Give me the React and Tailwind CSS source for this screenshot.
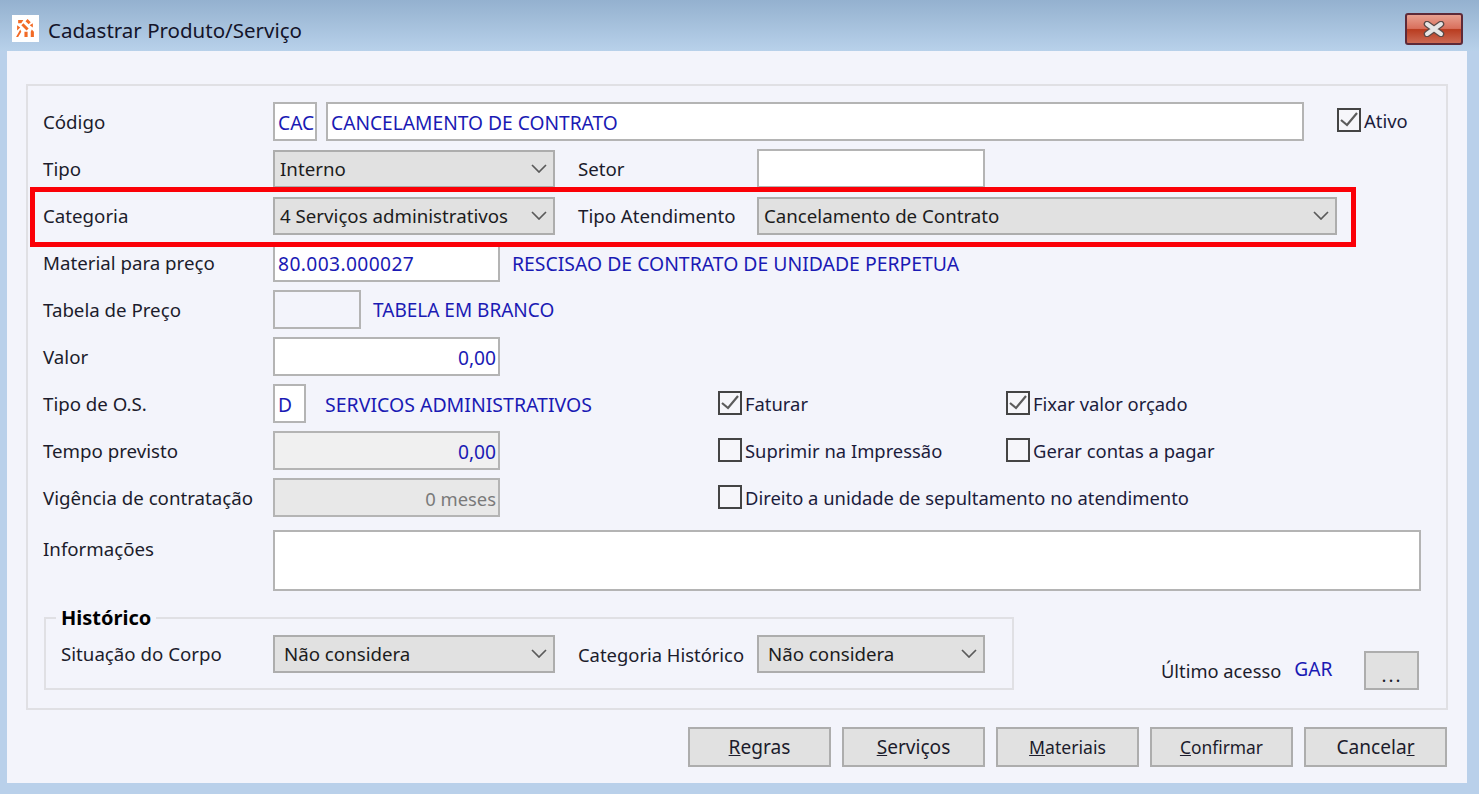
const blueText = 'text-[19.2px] text-[#1a1ab4] whitespace-nowrap';
const fieldBase = `border-2 border-[#b4b4b4] h-[39px] flex items-center ${blueText} px-[3px] pt-[3px] overflow-hidden shrink-0`;

function Label({ children, className = 'w-[230px]' }) {
  return <span className={`shrink-0 pt-[2px] text-[18.7px] text-[#1c1c2c] whitespace-nowrap ${className}`}>{children}</span>;
}

function Row({ label, children }) {
  return (
    <div className="flex items-center h-[47px]">
      <Label>{label}</Label>
      {children}
    </div>
  );
}

function Select({ value, className, pad = 'pl-[5px]' }) {
  return (
    <div className={`flex items-center justify-between h-[38px] shrink-0 border-2 border-[#adadad] bg-[#e1e1e1] pr-[6px] text-[18.7px] text-[#1c1c1c] ${pad} ${className}`}>
      <span className="whitespace-nowrap pt-[2px]">{value}</span>
      <svg viewBox="0 0 16 9" className="w-[16px] h-[9px]">
        <path d="M1 1 L8 8 L15 1" fill="none" stroke="#5a5a5a" strokeWidth="1.7" />
      </svg>
    </div>
  );
}

function Check({ label, checked, className = '' }) {
  return (
    <div className={`flex items-center shrink-0 ${className}`}>
      <span className="flex items-center justify-center w-[24px] h-[24px] border-2 border-[#444] bg-[#f6f6fa] mr-[3px] shrink-0">
        {checked && (
          <svg viewBox="0 0 20 20" className="w-[20px] h-[20px]">
            <path d="M2 10 L8 15 L18 3" fill="none" stroke="#5c5c5c" strokeWidth="2.2" />
          </svg>
        )}
      </span>
      <span className="text-[18.4px] text-[#1c1c3c] whitespace-nowrap">{label}</span>
    </div>
  );
}

function Btn({ pre = '', mark, post = '', className = 'text-[19.1px]' }) {
  return (
    <button className={`w-[143px] h-[40px] border-2 border-[#adadad] bg-[#e1e1e1] text-[#1c1c2c] ${className}`}>
      {pre}<span className="underline">{mark}</span>{post}
    </button>
  );
}

function Logo() {
  return (
    <div className="w-[27px] h-[27px] bg-white flex items-center justify-center shrink-0">
      <svg viewBox="0 0 20 20" className="w-[21px] h-[21px]">
        <path d="M3 2h5L6 5H3zM12 1l3 3-2 2-3-3zM17 5v4l-3-2zM2 7l3 2-3 3zM8 5l5 5-2 2-5-5zM16 11l2 2v5h-3v-5zM9 13h3v5H9zM5 11l1 2-3 5H1z" fill="#f26a25" />
      </svg>
    </div>
  );
}

export default function App() {
  return (
    <div className="relative w-[1479px] h-[794px] overflow-hidden bg-[#b9d0ea] font-['Noto_Sans','Open_Sans',sans-serif]">
      {/* Title bar */}
      <div className="h-[51px] pl-[12px] pr-[16px] pt-[13px] flex items-start bg-gradient-to-b from-[#94b1cf] to-[#b8d1ea]">
        <div className="mt-[2px]"><Logo /></div>
        <span className="ml-[9px] mt-[2px] text-[20.5px] text-[#14142a] whitespace-nowrap">Cadastrar Produto/Serviço</span>
        <button className="ml-auto w-[58px] h-[32px] rounded-[3px] border-2 border-[#5e2a38] flex items-center justify-center bg-[linear-gradient(#e8a090_0%,#d9705c_48%,#b93c20_52%,#cc6a54_100%)]">
          <svg viewBox="0 0 24 16" className="w-[24px] h-[16px]">
            <path d="M5 3 L19 13 M19 3 L5 13" stroke="#5a4a48" strokeWidth="6.5" strokeLinecap="round" />
            <path d="M5 3 L19 13 M19 3 L5 13" stroke="#e6e6e6" strokeWidth="4" strokeLinecap="round" />
          </svg>
        </button>
      </div>

      {/* Window body */}
      <div className="ml-[7px] w-[1460px] h-[732px] bg-[#f3f4fb] pt-[33px] pl-[19px] pr-[19px]">
        <div className="w-[1422px] h-[626px] border-2 border-[#e0e0e4] pl-[15px] pt-[12px]">
          <Row label="Código">
            <div className={`${fieldBase} w-[44px] bg-white`}>CAC</div>
            <div className={`${fieldBase} w-[978px] ml-[9px] bg-white`}>CANCELAMENTO DE CONTRATO</div>
            <Check label="Ativo" checked className="ml-[33px] -mt-[2px]" />
          </Row>
          <Row label="Tipo">
            <Select value="Interno" className="w-[282px]" />
            <Label className="w-[179px] ml-[23px]">Setor</Label>
            <div className={`${fieldBase} w-[228px] bg-white`} />
          </Row>
          <Row label="Categoria">
            <Select value="4 Serviços administrativos" className="w-[282px]" />
            <Label className="w-[179px] ml-[23px]">Tipo Atendimento</Label>
            <Select value="Cancelamento de Contrato" className="w-[580px]" />
          </Row>
          <Row label="Material para preço">
            <div className={`${fieldBase} w-[227px] bg-white tracking-[0.4px]`}>80.003.000027</div>
            <span className={`ml-[12px] ${blueText} !text-[19.4px] pt-[2px]`}>RESCISAO DE CONTRATO DE UNIDADE PERPETUA</span>
          </Row>
          <Row label="Tabela de Preço">
            <div className={`${fieldBase} w-[88px]`} />
            <span className={`ml-[12px] ${blueText} !text-[19px] pt-[2px]`}>TABELA EM BRANCO</span>
          </Row>
          <Row label="Valor">
            <div className={`${fieldBase} w-[227px] bg-white justify-end !pr-[2px]`}>0,00</div>
          </Row>
          <Row label="Tipo de O.S.">
            <div className={`${fieldBase} w-[33px] bg-white`}>D</div>
            <span className={`w-[393px] ml-[19px] shrink-0 ${blueText} !text-[19.5px] pt-[2px]`}>SERVICOS ADMINISTRATIVOS</span>
            <Check label="Faturar" checked className="w-[288px]" />
            <Check label="Fixar valor orçado" checked />
          </Row>
          <Row label="Tempo previsto">
            <div className={`${fieldBase} w-[227px] bg-[#f0f0f0] justify-end !pr-[2px]`}>0,00</div>
            <div className="w-[218px] shrink-0" />
            <Check label="Suprimir na Impressão" className="w-[288px]" />
            <Check label="Gerar contas a pagar" />
          </Row>
          <Row label="Vigência de contratação">
            <div className={`${fieldBase} w-[227px] bg-[#e8e8e8] justify-end !pr-[2px] !text-[18.4px] !text-[#7a7a7a]`}>0 meses</div>
            <div className="w-[218px] shrink-0" />
            <Check label="Direito a unidade de sepultamento no atendimento" />
          </Row>
          <div className="flex items-start mt-[9px] h-[61px]">
            <Label className="w-[230px] mt-[3px]">Informações</Label>
            <div className="w-[1148px] h-[61px] border-2 border-[#b4b4b4] bg-white" />
          </div>

          {/* Historico group */}
          <div className="flex items-end">
            <div className="relative ml-[1px] mt-[26px] w-[970px] h-[73px] border-2 border-[#e0e0e4] pl-[14px] flex items-center">
              <span className="absolute left-[10px] -top-[13px] bg-[#f3f4fb] px-[5px] text-[20px] leading-[24px] font-bold text-black">Histórico</span>
              <Label className="w-[212px] ml-[1px]">Situação do Corpo</Label>
              <Select value="Não considera" className="w-[282px]" pad="pl-[9px]" />
              <Label className="w-[179px] ml-[23px] !text-[18.4px]">Categoria Histórico</Label>
              <Select value="Não considera" className="w-[228px]" pad="pl-[9px]" />
            </div>
            <span className="ml-[147px] mb-[6px] text-[18.3px] text-[#1c1c2c] whitespace-nowrap">Último acesso</span>
            <span className={`ml-[13px] mb-[6px] ${blueText}`}>GAR</span>
            <button className="ml-[32px] w-[55px] h-[39px] border-2 border-[#adadad] bg-[#e1e1e1] pt-[8px] text-[18.7px] tracking-[2px] text-[#1c1c2c]">...</button>
          </div>
        </div>

        {/* Buttons */}
        <div className="flex justify-end gap-[11px] mt-[17px] pr-[1px]">
          <Btn mark="R" post="egras" />
          <Btn mark="S" post="erviços" />
          <Btn mark="M" post="ateriais" className="text-[17.6px]" />
          <Btn mark="C" post="onfirmar" className="text-[17.4px]" />
          <Btn pre="Cancela" mark="r" />
        </div>
      </div>

      {/* Red annotation */}
      <div className="absolute left-[30px] top-[187px] w-[1326px] h-[60px] border-[5px] border-[#fb0007]" />
    </div>
  );
}
